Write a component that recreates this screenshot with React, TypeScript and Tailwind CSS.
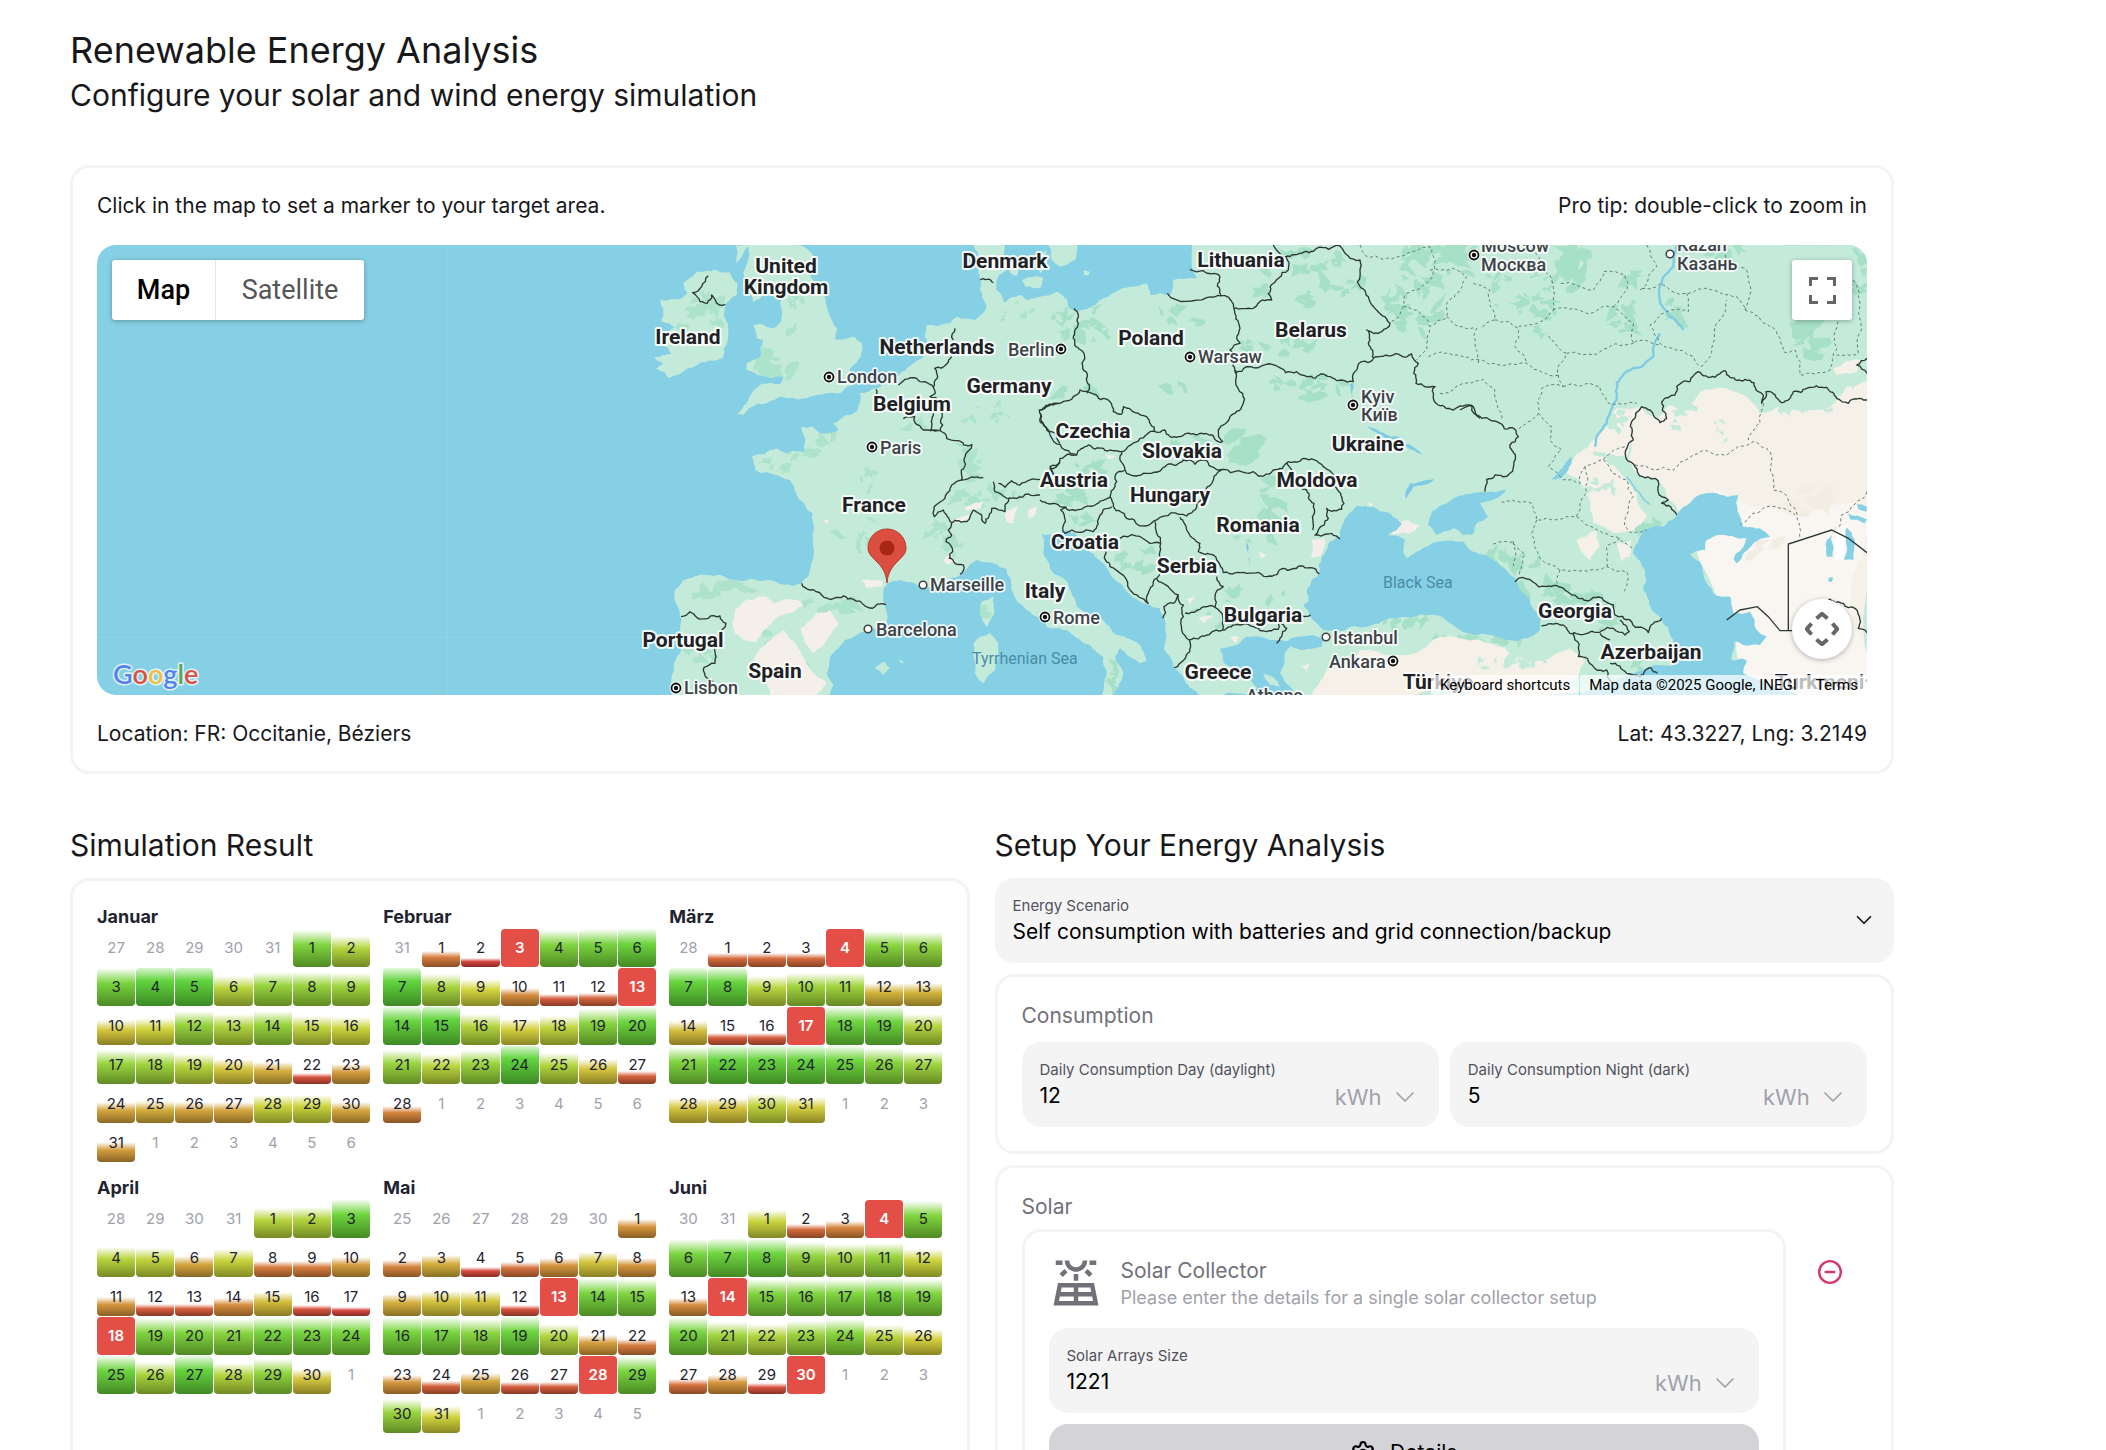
import React from "react";
import { ChevronDown, CircleMinus, Settings } from "lucide-react";
import { MdOutlineSolarPower } from "react-icons/md";

/* ---------- Map geometry helpers ---------- */

const noise = (a: number, b: number) => {
  const s = Math.sin(a * 12.9898 + b * 78.233) * 43758.5453;
  return (s - Math.floor(s)) * 2 - 1;
};

/* Turns "x y x y ..." into a path whose edges are broken up like a coastline. */
function rough(src: string, closed = true, amp = 0.11): string {
  const n = src.trim().split(/\s+/).map(Number);
  let pts: [number, number][] = [];
  for (let i = 0; i < n.length; i += 2) pts.push([n[i], n[i + 1]]);
  if (closed) pts.push(pts[0]);
  for (let pass = 0; pass < 3; pass++) {
    const next: [number, number][] = [];
    for (let i = 0; i < pts.length - 1; i++) {
      const [x1, y1] = pts[i];
      const [x2, y2] = pts[i + 1];
      const len = Math.hypot(x2 - x1, y2 - y1);
      next.push(pts[i]);
      if (len > 11) {
        const k = noise(x1 + x2, y1 + y2) * amp;
        next.push([(x1 + x2) / 2 - (y2 - y1) * k, (y1 + y2) / 2 + (x2 - x1) * k]);
      }
    }
    next.push(pts[pts.length - 1]);
    pts = next;
  }
  return "M" + pts.map((p) => p[0].toFixed(1) + " " + p[1].toFixed(1)).join("L") + (closed ? "Z" : "");
}

/* Scatters small irregular patches over an ellipse. */
function patches(cx: number, cy: number, rx: number, ry: number, count: number, size: number): string {
  let d = "";
  for (let i = 0; i < count; i++) {
    const a = noise(cx + i, cy) * Math.PI;
    const r = Math.sqrt(Math.abs(noise(cy + i * 3, cx)));
    const x = cx + Math.cos(a) * rx * r;
    const y = cy + Math.sin(a) * ry * r;
    const s = size * (0.5 + Math.abs(noise(i, x)));
    const tilt = noise(i, y) * 1.2;
    const ring: string[] = [];
    for (let j = 0; j < 9; j++) {
      const t = (j / 9) * Math.PI * 2;
      const q = s * (0.7 + 0.5 * noise(j + i, cx));
      const px = Math.cos(t) * q;
      const py = Math.sin(t) * q * 0.55;
      ring.push(
        (x + px * Math.cos(tilt) - py * Math.sin(tilt)).toFixed(1) + " " + (y + px * Math.sin(tilt) + py * Math.cos(tilt)).toFixed(1)
      );
    }
    d += "M" + ring.join("L") + "Z";
  }
  return d;
}

/* Coordinates of each sheet are thirds of a pixel from the sheet's own origin. */
const WEST = "translate(600 240) scale(.33333)";
const MID = "translate(1040 240) scale(.33333)";
const EAST = "translate(1460 240) scale(.33333)";

const WATER = "#86d0e5";
const LAND = "#c4ebda";
const FOREST = "#a6e0c6";
const SAND = "#f5f0e8";

const westLand = [
  "250 130 290 95 345 88 390 98 412 130 410 165 378 190 372 215 384 260 372 325 368 355 300 368 240 402 205 414 192 395 168 385 190 372 163 352 215 342 200 320 165 310 190 280 225 262 185 245 190 205 180 178 230 178 262 162",
  "440 15 600 15 640 50 625 100 665 150 680 200 695 240 712 270 705 298 760 290 785 310 783 350 750 385 765 430 740 440 720 460 640 468 600 478 540 470 500 490 455 500 430 525 412 525 440 490 480 435 540 432 550 410 510 415 440 390 440 370 480 350 490 300 470 295 460 255 520 265 545 240 540 190 550 170 490 165 460 185 450 160 430 100 445 60",
  "402 80 408 15 445 15 430 40 418 60",
  "1120 15 1215 15 1212 55 1238 78 1195 108 1190 150 1215 188 1265 165 1300 190 1400 175 1400 868 1325 880 1330 950 1250 1010 1190 972 1130 960 1080 1005 1030 1035 960 1040 900 1020 862 1030 850 1050 858 1110 860 1150 800 1170 735 1200 690 1250 680 1300 700 1335 690 1368 215 1368 215 1310 240 1240 245 1140 225 1050 250 1020 320 1005 400 1020 500 1020 605 1030 625 1010 640 900 638 820 600 780 570 720 510 700 465 690 455 650 530 625 560 640 615 635 615 600 605 560 640 560 660 580 715 570 700 550 770 515 780 460 830 445 890 410 940 370 975 340 1000 330 975 290 980 255 1050 250 1070 230 1125 240 1160 200 1140 150 1140 120",
  "1265 120 1330 115 1320 145 1275 140",
  "1300 50 1338 30 1340 80 1320 100",
  "1222 70 1262 66 1250 108 1232 100",
  "1145 1085 1180 1068 1182 1120 1160 1160 1140 1120",
  "1120 1210 1170 1178 1195 1210 1185 1290 1150 1330 1125 1300",
  "825 1285 855 1265 870 1285 850 1305",
  "895 1258 915 1265 905 1270",
];
const midLand = [
  "-60 190 0 170 50 155 75 175 75 200 110 215 180 180 270 140 320 130 330 165 390 165 400 120 470 115 455 15 2500 15 2500 1368 770 1368 720 1300 735 1240 760 1215 700 1200 620 1190 590 1215 540 1225 550 1265 610 1300 650 1340 650 1368 480 1368 430 1310 400 1280 372 1230 378 1150 360 1105 320 1092 250 1040 190 970 150 935 110 885 80 870 -60 870",
  "-100 900 5 885 5 940 40 1000 85 1030 110 1100 190 1140 220 1180 300 1215 320 1260 300 1270 240 1225 225 1250 250 1300 235 1340 215 1368 185 1368 200 1300 190 1250 150 1215 100 1185 60 1165 20 1160 -40 1110 -85 1050 -100 990",
  "25 15 110 15 105 60 60 80 35 60",
  "130 90 150 95 145 108 132 105",
  "670 1300 700 1312 720 1340 690 1335",
];
const midSea = [
  "950 797 920 830 900 890 870 905 845 950 838 1000 800 1050 805 1085 790 1095 810 1130 850 1170 910 1172 980 1160 1050 1135 1170 1125 1240 1155 1300 1185 1400 1200 1460 1195 1500 1170 1500 1130 1470 1080 1430 1020 1360 960 1300 935 1270 905 1250 905 1160 920 1100 955 1090 935 1095 900 1045 885 1085 850 1050 820 1000 800",
  "735 1205 770 1190 850 1198 845 1220 760 1225",
];
const eastSea = [
  "-95 855 -85 815 -40 790 10 765 75 757 140 748 60 790 85 830 50 850 40 882 10 885 -20 865 -70 885",
  "730 762 770 760 800 770 835 765 850 860 900 865 930 890 880 910 830 970 820 955 850 920 860 895 790 885 740 900 735 930 690 945 720 965 740 1030 760 1060 810 1070 820 1120 870 1115 885 1160 920 1190 900 1215 850 1215 822 1205 815 1260 860 1260 850 1300 875 1320 870 1368 645 1368 640 1200 600 1130 550 1050 555 990 518 940 540 890 550 870 610 860 670 800",
  "275 718 300 690 335 650 325 690 300 715",
  "1100 900 1130 850 1118 950 1100 950",
  "1160 862 1185 900 1180 960 1152 960",
  "1190 792 1221 800 1221 815 1195 808",
  "1165 820 1221 838 1215 850 1170 838",
  "1105 1015 1118 1010 1116 1025 1106 1025",
];
const eastSand = [
  "505 660 520 540 545 500 590 540 625 495 665 520 700 485 720 455 800 445 860 470 900 520 960 500 1040 515 1110 500 1160 440 1240 425 1240 1368 850 1368 700 900 650 800 625 780 590 715 540 710",
  "540 500 470 505 440 560 410 590 350 640 318 700 360 720 385 770 400 850 470 880 520 870 560 830 530 760 500 720 430 660 500 650 515 600",
  "350 900 410 870 420 920 390 960 360 930",
  "470 910 515 900 510 950 480 965",
  "-190 1245 -60 1190 60 1200 200 1262 330 1225 375 1262 330 1330 355 1368 -450 1368 -400 1290 -300 1230",
  "1120 385 1200 360 1190 395 1130 405",
];
const westSand = [
  "405 1110 440 1080 500 1070 520 1090 590 1080 610 1095 560 1120 500 1165 470 1205 430 1200 405 1180",
  "600 1165 650 1120 690 1110 715 1150 680 1200 640 1240 615 1210",
  "510 1200 550 1170 590 1215 640 1300 680 1330 650 1366 510 1366 500 1300 460 1260",
  "785 1020 850 1025 845 1040 800 1045",
  "1095 800 1150 785 1140 805 1100 812",
  "1215 820 1255 800 1240 850 1220 845",
  "1285 810 1310 800 1300 830 1285 835",
  "1030 960 1055 940 1065 965 1045 975",
  "1060 840 1110 825 1095 845 1065 848",
  "668 842 690 838 680 852",
];
const midSand = [
  "815 900 855 895 840 950 815 955",
  "475 1135 520 1128 490 1150",
  "570 1190 600 1190 590 1210",
  "1050 870 1105 840 1140 855 1110 880 1060 885",
  "655 935 680 945 665 955",
  "195 640 225 650 205 658",
  "440 1075 465 1070 450 1095",
  "980 785 1005 790 990 798",
  "785 1280 810 1270 800 1295",
];

const westForest =
  patches(300, 230, 80, 70, 8, 30) + patches(590, 210, 40, 90, 8, 28) + patches(530, 370, 60, 50, 7, 34) + patches(540, 660, 50, 30, 5, 26) +
  patches(660, 610, 50, 50, 6, 26) + patches(800, 720, 40, 30, 5, 22) + patches(780, 870, 90, 60, 9, 24) + patches(1080, 670, 60, 60, 7, 28) +
  patches(1170, 540, 80, 50, 8, 20) + patches(350, 1050, 110, 30, 12, 40) + patches(700, 1090, 90, 25, 8, 30) + patches(1040, 900, 60, 60, 10, 26) +
  patches(1160, 770, 110, 30, 12, 28) + patches(1240, 210, 80, 40, 5, 18) + patches(560, 1240, 120, 80, 8, 22) + patches(1155, 1110, 12, 30, 3, 22) +
  patches(320, 1270, 70, 70, 6, 24) + patches(930, 550, 40, 25, 4, 22);
const midForest =
  patches(140, 250, 110, 60, 14, 26) + patches(430, 220, 80, 40, 6, 22) + patches(800, 110, 160, 80, 26, 26) + patches(700, 320, 110, 30, 10, 22) +
  patches(790, 440, 130, 40, 18, 24) + patches(620, 630, 60, 50, 8, 34) + patches(700, 760, 30, 70, 7, 34) + patches(90, 750, 80, 40, 10, 26) +
  patches(1130, 180, 90, 110, 26, 32) + patches(1180, 40, 120, 26, 18, 38) + patches(300, 950, 60, 50, 8, 26) + patches(160, 690, 60, 30, 6, 22) +
  patches(420, 600, 80, 20, 6, 26) + patches(650, 1065, 110, 20, 5, 22) + patches(430, 440, 70, 15, 4, 18) + patches(130, 470, 80, 30, 6, 20) +
  patches(1100, 1145, 80, 12, 10, 26) + patches(540, 1120, 100, 40, 8, 18) + patches(230, 1310, 12, 40, 4, 24) + patches(640, 890, 60, 40, 3, 18) + patches(130, 830, 30, 20, 3, 26);
const eastForest =
  patches(330, 80, 60, 60, 14, 38) + patches(170, 140, 110, 80, 18, 24) + patches(490, 240, 60, 50, 12, 26) + patches(260, 250, 30, 70, 8, 26) +
  patches(1050, 290, 40, 70, 10, 40) + patches(1195, 110, 20, 60, 5, 34) + patches(520, 110, 30, 30, 4, 30) + patches(650, 220, 40, 40, 5, 22) +
  patches(160, 960, 80, 30, 10, 26) + patches(300, 1060, 130, 26, 16, 28) + patches(60, 1200, 140, 10, 14, 24) + patches(450, 1130, 60, 50, 8, 24) +
  patches(560, 1300, 60, 40, 5, 26) + patches(20, 60, 90, 50, 12, 26) + patches(560, 850, 40, 20, 3, 34) + patches(800, 40, 60, 20, 5, 22);
const eastGlades =
  patches(680, 500, 40, 30, 6, 26) + patches(790, 570, 30, 40, 5, 16) + patches(1020, 500, 120, 24, 16, 20) + patches(430, 740, 50, 50, 8, 18) +
  patches(480, 540, 30, 40, 6, 18) + patches(960, 460, 90, 20, 6, 26) + patches(140, 1265, 130, 28, 14, 18) + patches(1140, 420, 60, 30, 6, 18) + patches(650, 560, 12, 20, 3, 14);
const eastHaze = patches(1060, 780, 90, 50, 12, 30) + patches(920, 960, 60, 60, 5, 24);

const westBorders = [
  "325 107 305 140 278 158 300 185 322 190 335 165 358 195 376 193",
  "605 1030 630 1050 665 1065 700 1076 730 1068 760 1078 795 1098 825 1100 858 1094",
  "243 1130 270 1115 290 1132 325 1135 360 1128 378 1150 368 1168 345 1190 344 1230 345 1270 312 1282 322 1315 340 1325",
  "895 435 915 418 950 415 975 425 1000 442 1006 460 990 470 1008 472 1022 540 1028 555 1020 572 1000 570 970 570 945 548 944 530 910 536",
  "1000 442 1012 415 1004 385 1040 372 1055 350",
  "1060 300 1065 265",
  "1140 120 1180 128",
  "828 448 830 462",
  "1000 520 992 570 1020 572 1040 595 1070 602 1116 614 1095 650 1084 690 1085 720",
  "1085 720 1055 735 1035 775 1015 790 1003 830 1030 810 1042 830 1055 848 1100 845 1120 810 1155 850 1175 805 1215 815 1230 772",
  "1085 720 1125 712 1150 712",
  "1180 725 1185 755 1210 768 1250 775 1285 762 1320 765",
  "1195 730 1215 742 1235 722 1260 735 1290 720 1320 718",
  "1055 848 1045 870 1055 885 1038 905 1058 935 1048 955 1065 970 1090 975 1080 1003",
  "1380 490 1340 500 1318 510 1335 560 1380 610",
  "1380 665 1350 680 1362 705",
];
const midBorders = [
  "102 205 115 250 100 295 122 330 128 385 142 410 142 460",
  "0 510 40 495 100 470 120 450 160 462 210 485 220 515 245 522 250 500 285 518 320 530 345 575",
  "345 575 375 570 390 590 440 580 490 582 535 605 548 605 535 570 570 530 608 495 608 460 587 425 587 390",
  "382 160 500 173 555 167 582 205 600 265 600 310 570 330 587 355 587 400 620 380 710 378 770 395 800 410 850 402 905 420 940 425 945 395 965 365 1000 358",
  "582 205 640 205 680 180 695 180 690 140 745 90 738 50 710 30 700 15",
  "450 88 490 92 540 110 543 165",
  "738 50 780 40 830 25 900 18 960 60 952 125 985 170 1005 205 1050 250 1025 275 980 270 985 310 1000 355 1060 345 1115 342 1135 370 1128 430 1185 440 1195 495 1240 510 1300 500 1320 535",
  "0 520 20 570 75 630 110 645 145 615 190 625 245 635 300 595 330 575 345 575",
  "110 645 60 655 50 680 30 685 40 705",
  "245 635 240 660 255 690 290 708 335 700 380 675 430 660 500 662 550 688 520 720 495 755 470 790 440 828 350 840 315 858 260 835 220 800 210 770 225 740 225 710 255 690",
  "0 780 60 800 120 808 165 795 210 772",
  "215 800 180 825 160 875 75 880 62 810 80 802",
  "550 688 640 695 655 708 700 690 745 665 790 655 850 680 880 710 890 745 912 790 905 808 860 805 865 835 835 870 825 885 860 882 875 880 900 897",
  "740 668 770 720 800 750 822 790 818 870",
  "420 832 440 870 480 910 475 935 520 945 540 975 550 998 620 1000 690 1008 730 985 780 978 838 1002",
  "345 845 350 880 362 910 330 910 240 895",
  "362 910 358 980 350 1015 325 1060 325 1090 270 1050 210 980 198 935",
  "350 1015 385 1040 415 1065 400 1090 372 1100 368 1135",
  "415 1065 430 1130 425 1170 448 1200 452 1220 420 1270 402 1282",
  "435 1120 480 1108 525 1102 525 1070 550 1040 530 1010",
  "525 1102 548 1130 548 1170 500 1185 448 1200",
  "548 1170 600 1155 660 1172 715 1168 715 1150 740 1165 725 1190 710 1210",
  "785 1125 812 1125",
];
const eastBorders = [
  "0 510 35 497 65 535 110 545 165 568 175 590 150 615 162 665 150 700 105 705 80 718 75 755",
  "650 825 605 790 625 780 585 715 540 708 525 680 498 655 520 600 515 545 545 500 570 510 600 548 620 535 605 485 645 465 650 440 690 425 715 395 765 412 795 392 810 412 855 418 895 455 910 465 905 490 918 455 965 488 1000 455 1040 445 1100 442 1130 475 1165 490 1200 475 1221 480",
  "165 1025 175 1015 260 1040 310 1045 355 1075 400 1072 460 1095 465 1125 510 1140 565 1178 605 1135",
  "245 1158 300 1155 330 1180 380 1180 425 1172 460 1165 495 1185 508 1175 480 1140",
  "340 1182 355 1250 400 1280 440 1290 455 1325",
  "420 1180 450 1200",
  "1105 1078 1150 1090 1185 1105 1200 1140 1195 1165 1221 1178",
  "1221 355 1190 375 1221 400",
  "450 1270 500 1300 540 1310 575 1285 592 1300",
];
const dashed = [
  "-300 15 -280 50 -180 50 -90 20 -75 60 -90 120 -160 160 -170 200 -210 250",
  "-170 200 -130 210 -90 260 -100 330 -130 360",
  "-90 90 -20 85 20 110 0 150 -40 190 -40 230 -90 260",
  "-40 230 0 260 50 265 45 310 55 370",
  "-95 350 -40 340 10 350 60 360 120 375 200 370 295 405 320 340 260 280",
  "-60 460 0 435 70 418 105 450 125 540",
  "40 130 90 150 105 240 60 265",
  "105 240 150 245 175 265 165 320 200 370",
  "200 15 240 60 275 120 280 210 240 245 170 265",
  "280 210 340 205 380 220 460 200 520 250 520 310 600 315",
  "320 340 420 335 520 310",
  "460 200 500 150 495 105 430 95 400 150 300 130",
  "560 15 590 80 540 150 600 130 680 160 740 145 830 170 855 210 930 260 970 335 1005 330 1020 405 1110 390 1130 330 1135 240",
  "680 160 685 215 620 215 570 255 600 310 720 380 750 350 770 250 800 180",
  "780 15 800 60 860 90 855 210",
  "1180 120 1200 200 1195 340 1130 345",
  "295 405 310 440 245 445 235 520 170 568",
  "310 440 420 440 440 485 530 490",
  "235 520 275 560 270 600 305 630 265 680 310 720 360 730 375 680 430 660 500 620",
  "375 680 380 760 350 830 230 840 215 790 170 785 120 785",
  "430 660 500 720 520 770 495 860 520 880 560 870",
  "350 830 430 880 520 930",
  "230 840 215 880 245 960 300 990 410 990 440 980 500 995 490 1060",
  "440 980 440 920 480 890",
  "100 912 160 905 195 945 180 1010",
  "300 990 295 1035",
  "525 675 640 690 740 632 800 645 880 605 930 635 940 750 1005 805 1020 895",
  "910 490 900 550 865 600",
  "840 855 880 820 960 805 1005 825",
  "1221 755 1145 825 1135 865",
  "160 905 155 985",
];
const rivers = [
  "650 15 640 80 600 140 600 190 630 230 670 270",
  "600 280 580 350 500 395 470 430 470 480 440 550 405 620",
];
const midLakes = [
  "980 560 1030 578 1080 592 1065 598 1020 585",
  "1090 610 1120 620 1145 642 1120 630",
  "1110 730 1150 722 1182 718 1150 735 1120 740 1100 775 1095 770",
  "930 430 942 430 938 478",
  "618 910 622 910 632 972 628 975",
];

const countries: [string, number, number][] = [
  ["United", 786, 273],
  ["Kingdom", 786, 294],
  ["Ireland", 688, 344],
  ["Denmark", 1005, 268],
  ["Netherlands", 937, 354],
  ["Germany", 1009, 393],
  ["Belgium", 912, 411],
  ["France", 874, 512],
  ["Portugal", 683, 647],
  ["Spain", 775, 678],
  ["Italy", 1045, 598],
  ["Lithuania", 1241, 267],
  ["Poland", 1151, 345],
  ["Belarus", 1311, 337],
  ["Czechia", 1093, 438],
  ["Slovakia", 1182, 458],
  ["Ukraine", 1368, 451],
  ["Austria", 1074, 487],
  ["Moldova", 1317, 487],
  ["Hungary", 1170, 502],
  ["Romania", 1258, 532],
  ["Croatia", 1085, 549],
  ["Serbia", 1187, 573],
  ["Bulgaria", 1263, 622],
  ["Greece", 1218, 679],
  ["Georgia", 1575, 618],
  ["Azerbaijan", 1651, 659],
  ["Türkiye", 1438, 689],
  ["Turkmenistan", 1840, 689],
];
const cities: [string, number, number][] = [
  ["London", 837, 383],
  ["Paris", 880, 454],
  ["Berlin", 1008, 356],
  ["Warsaw", 1198, 363],
  ["Kyiv", 1361, 403],
  ["Київ", 1361, 421],
  ["Marseille", 930, 591],
  ["Barcelona", 876, 636],
  ["Rome", 1053, 624],
  ["Lisbon", 684, 694],
  ["Istanbul", 1333, 644],
  ["Ankara", 1329, 668],
  ["Athens", 1246, 702],
  ["Moscow", 1481, 252],
  ["Москва", 1481, 271],
  ["Kazan", 1677, 251],
  ["Казань", 1677, 270],
];
const capitals = [
  [829, 377],
  [872, 447],
  [1061, 349],
  [1190, 357],
  [1353, 405],
  [1045, 617],
  [676, 688],
  [1393, 661],
  [1474, 255],
];
const towns = [
  [923, 585],
  [868, 629],
  [1326, 637],
  [1670, 254],
];

function Shapes({ list, fill }: { list: string[]; fill: string }) {
  return <path d={list.map((s) => rough(s)).join("")} fill={fill} />;
}
function Lines({ list, dash }: { list: string[]; dash?: boolean }) {
  return (
    <path
      d={list.map((s) => rough(s, false, dash ? 0.14 : 0.2)).join("")}
      fill="none"
      stroke={dash ? "#5f7c72" : "#2c3835"}
      strokeWidth={dash ? 3 : 4}
      strokeDasharray={dash ? "9 8" : undefined}
      strokeLinejoin="round"
    />
  );
}

function MapDrawing() {
  return (
    <svg
      viewBox="97 245 1770 450"
      preserveAspectRatio="xMidYMid slice"
      className="absolute inset-0 h-full w-full"
      role="img"
      aria-label="Map of Europe"
      fontFamily="Roboto, sans-serif"
    >
      <rect x="97" y="245" width="1770" height="450" fill={WATER} />
      <path d="M447.500 245V695M97 637.500H690" stroke="#8fd3e6" strokeWidth="1" fill="none" />
      <clipPath id="west-land">
        <path transform={WEST} d={westLand.map((s) => rough(s)).join("")} />
      </clipPath>
      <clipPath id="mid-land">
        <path transform={MID} d={midLand.map((s) => rough(s)).join("")} />
      </clipPath>
      <g transform={WEST}>
        <Shapes list={westLand} fill={LAND} />
      </g>
      <g transform={MID}>
        <Shapes list={midLand} fill={LAND} />
      </g>
      <g clipPath="url(#west-land)">
        <g transform={WEST}>
          <path d={westForest} fill={FOREST} opacity=".75" />
          <Shapes list={westSand} fill="#f5efe9" />
        </g>
      </g>
      <g clipPath="url(#mid-land)">
        <g transform={MID}>
          <path d={midForest} fill={FOREST} />
          <Shapes list={midSand} fill="#f3eeea" />
        </g>
        <g transform={EAST}>
          <path d={eastForest} fill={FOREST} />
          <Shapes list={eastSand} fill={SAND} />
          <path d={rough("700 900 760 740 900 800 1010 830 1221 800 1240 1368 850 1368")} fill="#f9f6f2" />
          <path d={eastHaze} fill="#f1ede3" />
          <path d={eastGlades} fill={LAND} />
          <path d={rough("1130 870 1165 850 1150 960 1125 960")} fill="#fff" />
        </g>
      </g>
      <g transform={MID}>
        <Shapes list={midSea} fill={WATER} />
        <Shapes list={midLakes} fill="#7fcbe6" />
      </g>
      <g transform={EAST}>
        <Shapes list={eastSea} fill={WATER} />
        <path d={rivers.map((s) => rough(s, false)).join("")} fill="none" stroke="#7fcbe6" strokeWidth="7" strokeLinejoin="round" />
        <path d={rough("400 640 460 650 520 720 600 800", false)} fill="none" stroke={LAND} strokeWidth="12" />
        <path d={rough("500 710 540 760 570 795", false)} fill="none" stroke="#7fcbe6" strokeWidth="4" />
        <Lines list={dashed} dash />
        <Lines list={eastBorders} />
        <path d="M800 1140L840 1110 892 1100 925 1130 960 1172H1000M985 1170V912L1115 870 1165 895 1221 938" fill="none" stroke="#2c3835" strokeWidth="4" />
      </g>
      <g transform={MID}>
        <Lines list={midBorders} />
      </g>
      <g transform={WEST}>
        <Lines list={westBorders} />
      </g>

      {capitals.map(([x, y]) => (
        <g key={x}>
          <circle cx={x} cy={y} r="6.500" fill="#fff" opacity=".8" />
          <circle cx={x} cy={y} r="4.500" fill="#fff" stroke="#111" strokeWidth="1.800" />
          <circle cx={x} cy={y} r="2.200" fill="#111" />
        </g>
      ))}
      {towns.map(([x, y]) => (
        <circle key={x} cx={x} cy={y} r="3.800" fill="#fff" stroke="#444" strokeWidth="1.600" />
      ))}
      <g fontSize="18" fill="#3d4448" stroke="#fff" strokeOpacity=".85" strokeWidth="3.500" strokeLinejoin="round" paintOrder="stroke" fontWeight="500">
        {cities.map(([name, x, y]) => (
          <text key={name} x={x} y={y}>
            {name}
          </text>
        ))}
      </g>
      <g fontSize="16" fill="#4a8ba6">
        <text x="1383" y="588">
          Black Sea
        </text>
        <text x="972" y="664">
          Tyrrhenian Sea
        </text>
      </g>
      <g fontSize="21" fontWeight="700" fill="#202124" stroke="#fff" strokeOpacity=".9" strokeWidth="4" strokeLinejoin="round" paintOrder="stroke" textAnchor="middle">
        {countries.map(([name, x, y]) => (
          <text key={name} x={x} y={y}>
            {name}
          </text>
        ))}
      </g>
      <path
        d="M887 583C886 571 881 566 876 561C871 556 868 553 868 548A19 19 0 0 1 906 548C906 553 903 556 898 561C893 566 888 571 887 583Z"
        fill="#dc4e3f"
        stroke="#b8382b"
        strokeWidth="1"
      />
      <circle cx="887" cy="548" r="7.500" fill="#a52714" />
    </svg>
  );
}

/* ---------- Calendar ---------- */

/* Each day is the height of its bar in pixels; 0 marks a day without supply. */
type Month = { name: string; before: number[]; days: number[]; after: number[] };
const months: Month[] = [
  {
    name: "Januar",
    before: [27, 28, 29, 30, 31],
    days: [37, 31, 38, 42, 42, 30, 34, 34, 33, 25, 27, 34, 31, 34, 29, 28, 34, 33, 30, 25, 22, 11, 20, 21, 22, 21, 21, 28, 28, 21, 20],
    after: [1, 2, 3, 4, 5, 6],
  },
  {
    name: "Februar",
    before: [31],
    days: [16, 9, 0, 37, 38, 39, 41, 32, 27, 18, 12, 13, 0, 40, 42, 31, 26, 29, 36, 39, 34, 30, 34, 42, 31, 25, 13, 17],
    after: [1, 2, 3, 4, 5, 6],
  },
  {
    name: "März",
    before: [28],
    days: [14, 14, 14, 0, 36, 35, 40, 40, 30, 33, 33, 23, 23, 24, 12, 12, 0, 39, 39, 31, 37, 40, 40, 40, 39, 36, 33, 25, 25, 29, 26],
    after: [1, 2, 3],
  },
  {
    name: "April",
    before: [28, 29, 30, 31],
    days: [30, 31, 39, 30, 29, 21, 28, 16, 16, 20, 19, 12, 12, 18, 24, 11, 9, 0, 37, 37, 36, 38, 38, 38, 39, 32, 40, 31, 35, 25],
    after: [1],
  },
  {
    name: "Mai",
    before: [25, 26, 27, 28, 29, 30],
    days: [19, 17, 22, 10, 15, 19, 25, 19, 22, 25, 25, 11, 0, 38, 37, 38, 38, 36, 39, 31, 20, 16, 19, 13, 21, 12, 12, 0, 38, 34, 27],
    after: [1, 2, 3, 4, 5],
  },
  {
    name: "Juni",
    before: [30, 31],
    days: [28, 14, 17, 0, 37, 38, 39, 39, 35, 33, 34, 28, 18, 0, 37, 37, 37, 38, 37, 38, 33, 31, 34, 36, 30, 26, 15, 19, 11, 0],
    after: [1, 2, 3],
  },
];

function barStyle(height: number): React.CSSProperties {
  const hue = Math.min(106, Math.max(3, Math.round((height - 8.5) * 3.3)));
  return {
    height,
    background: `linear-gradient(to bottom, hsl(${hue} 65% 55% / 0), hsl(${hue} 64% 54%) 40%, hsl(${hue} 58% 34%))`,
  };
}

function MonthGrid({ month }: { month: Month }) {
  return (
    <section>
      <h3 className="text-[18px] leading-6 font-bold text-[#1f2430]">{month.name}</h3>
      <div className="grid grid-cols-7 gap-px text-center text-[15px] leading-[38px]">
        {month.before.map((d) => (
          <span key={"b" + d} className="h-[38px] text-[#a1a1aa]">
            {d}
          </span>
        ))}
        {month.days.map((h, i) =>
          h === 0 ? (
            <span key={i} className="h-[38px] rounded-[4px] bg-[#e34f47] font-semibold text-white">
              {i + 1}
            </span>
          ) : (
            <span key={i} className="relative h-[38px] overflow-hidden rounded-[4px] text-[#1f2430]">
              <span className="absolute inset-x-0 bottom-0" style={barStyle(h)} />
              <span className="relative">{i + 1}</span>
            </span>
          )
        )}
        {month.after.map((d) => (
          <span key={"a" + d} className="h-[38px] text-[#a1a1aa]">
            {d}
          </span>
        ))}
      </div>
    </section>
  );
}

/* ---------- Form ---------- */

function NumberField({ id, label, value }: { id: string; label: string; value: string }) {
  return (
    <div className="flex h-[85px] items-center rounded-[19px] bg-[#f4f4f5] px-[18px]">
      <div className="min-w-0 flex-1">
        <label htmlFor={id} className="block text-[15px] leading-[23px] text-[#52525b]">
          {label}
        </label>
        <input id={id} defaultValue={value} className="block h-[30px] w-full bg-transparent text-[21px] leading-[30px] text-black outline-none" />
      </div>
      <div className="relative mt-6 flex items-center">
        <select aria-label={label + " unit"} className="w-[86px] appearance-none bg-transparent text-[22px] leading-[30px] text-[#a1a1aa] outline-none">
          <option>kWh</option>
        </select>
        <ChevronDown className="pointer-events-none absolute right-0 size-8 text-[#a1a1aa]" strokeWidth={1.3} />
      </div>
    </div>
  );
}

const card = "rounded-[19px] border-[3px] border-[#f4f4f5]";

export default function App() {
  return (
    <main className="h-screen overflow-y-auto bg-white pt-[27px] pr-[212px] pl-[70px] font-['Inter',sans-serif] text-[#18181b] [scrollbar-width:none]">
      <h1 className="text-[36px] leading-[46px]">Renewable Energy Analysis</h1>
      <p className="text-[30px] leading-[44px]">Configure your solar and wind energy simulation</p>

      <section className={card + " mt-12 p-6 text-[21px] leading-[27px]"}>
        <div className="flex justify-between">
          <p>Click in the map to set a marker to your target area.</p>
          <p>Pro tip: double-click to zoom in</p>
        </div>
        <div className="relative mt-[26px] mb-[25px] h-[450px] overflow-hidden rounded-[19px]">
          <MapDrawing />
          <div className="absolute top-[15px] left-[15px] flex h-[60px] rounded-[3px] bg-white font-['Roboto',sans-serif] text-[27px] shadow-[0_1px_5px_rgba(0,0,0,0.3)]">
            <button className="w-[104px] border-r border-[#e6e6e6] font-medium text-black">Map</button>
            <button className="w-[148px] text-[#565656]">Satellite</button>
          </div>
          <button aria-label="Toggle fullscreen view" className="absolute top-[15px] right-[15px] grid size-[60px] place-items-center rounded-[3px] bg-white shadow-[0_1px_5px_rgba(0,0,0,0.3)]">
            <svg viewBox="0 0 18 18" className="size-[27px]" fill="#666">
              <path d="M0 0v6h2V2h4V0H0zm16 0h-4v2h4v4h2V0h-2zm0 16h-4v2h6v-6h-2v4zM2 12H0v6h6v-2H2v-4z" />
            </svg>
          </button>
          <button aria-label="Map camera controls" className="absolute right-[15px] bottom-[36px] grid size-[60px] place-items-center rounded-full bg-white shadow-[0_1px_5px_rgba(0,0,0,0.3)]">
            <svg viewBox="0 0 34 34" className="size-[34px]" fill="none" stroke="#666" strokeWidth="4">
              <path d="M11.500 6.500 17 1.800 22.500 6.500M11.500 27.500 17 32.200 22.500 27.500M6.500 11.500 1.800 17 6.500 22.500M27.500 11.500 32.200 17 27.500 22.500" />
            </svg>
          </button>
          <svg viewBox="0 0 92 36" className="absolute bottom-0 left-[13px] h-[36px] w-[92px]" role="img" aria-label="Google">
            <text x="3" y="25" fontFamily="Lato, sans-serif" fontSize="27" fontWeight="600" stroke="#fff" strokeOpacity=".75" strokeWidth="3" paintOrder="stroke" strokeLinejoin="round">
              <tspan fill="#5383ec">G</tspan>
              <tspan fill="#d85140">o</tspan>
              <tspan fill="#f1be42">o</tspan>
              <tspan fill="#5383ec">g</tspan>
              <tspan fill="#58a55c">l</tspan>
              <tspan fill="#d85140">e</tspan>
            </text>
          </svg>
          <div className="absolute right-0 bottom-0 flex gap-px font-['Roboto',sans-serif] text-[15px] leading-5 text-black">
            <button className="bg-white/70 px-[9px]">Keyboard shortcuts</button>
            <span className="bg-white/70 px-[9px]">Map data ©2025 Google, INEGI</span>
            <a href="#terms" className="bg-white/70 px-[9px]">
              Terms
            </a>
          </div>
        </div>
        <div className="flex justify-between">
          <p>Location: FR: Occitanie, Béziers</p>
          <p>Lat: 43.3227, Lng: 3.2149</p>
        </div>
      </section>

      <div className="mt-12 grid grid-cols-2 gap-[25px]">
        <section className="flex flex-col">
          <h2 className="mb-[10px] text-[30px] leading-[46px]">Simulation Result</h2>
          <div className={card + " grid flex-1 grid-cols-3 content-start gap-x-[13px] gap-y-[14px] p-6"}>
            {months.map((m) => (
              <MonthGrid key={m.name} month={m} />
            ))}
          </div>
        </section>

        <section>
          <h2 className="mb-[10px] text-[30px] leading-[46px]">Setup Your Energy Analysis</h2>
          <div className="flex flex-col gap-[11px]">
            <div className="relative flex h-[85px] flex-col justify-center rounded-[19px] bg-[#f4f4f5] px-[18px]">
              <label htmlFor="scenario" className="block text-[15px] leading-[23px] text-[#52525b]">
                Energy Scenario
              </label>
              <select id="scenario" className="block h-[30px] w-full appearance-none bg-transparent text-[21px] leading-[30px] text-black outline-none">
                <option>Self consumption with batteries and grid connection/backup</option>
              </select>
              <ChevronDown className="pointer-events-none absolute top-[29px] right-[17px] size-[26px] text-[#18181b]" strokeWidth={1.6} />
            </div>

            <section className={card + " p-6"}>
              <h3 className="mb-[11px] text-[21px] leading-[30px] text-[#71717a]">Consumption</h3>
              <div className="grid grid-cols-2 gap-[11px]">
                <NumberField id="day" label="Daily Consumption Day (daylight)" value="12" />
                <NumberField id="night" label="Daily Consumption Night (dark)" value="5" />
              </div>
            </section>

            <section className={card + " p-6"}>
              <h3 className="mb-[7px] text-[21px] leading-[30px] text-[#71717a]">Solar</h3>
              <div className="flex items-start">
                <div className={card + " flex-1 p-6"}>
                  <div className="mb-[18px] flex items-center gap-[18px]">
                    <MdOutlineSolarPower className="size-[54px] text-[#71717a]" />
                    <div>
                      <h4 className="text-[21px] leading-[29px] text-[#71717a]">Solar Collector</h4>
                      <p className="text-[18px] leading-[25px] text-[#a1a1aa]">Please enter the details for a single solar collector setup</p>
                    </div>
                  </div>
                  <NumberField id="array" label="Solar Arrays Size" value="1221" />
                  <button className="mt-[11px] flex h-[58px] w-full items-center justify-center gap-[14px] rounded-[19px] bg-[#d4d4d8] text-[21px] text-black">
                    <Settings className="size-[26px]" />
                    Details
                  </button>
                </div>
                <button aria-label="Remove solar collector" className="mt-[27px] mr-[22px] ml-[28px] grid size-[31px] place-items-center text-[#d33a6a]">
                  <CircleMinus className="size-[26px]" strokeWidth={2.2} />
                </button>
              </div>
            </section>
          </div>
        </section>
      </div>
    </main>
  );
}
